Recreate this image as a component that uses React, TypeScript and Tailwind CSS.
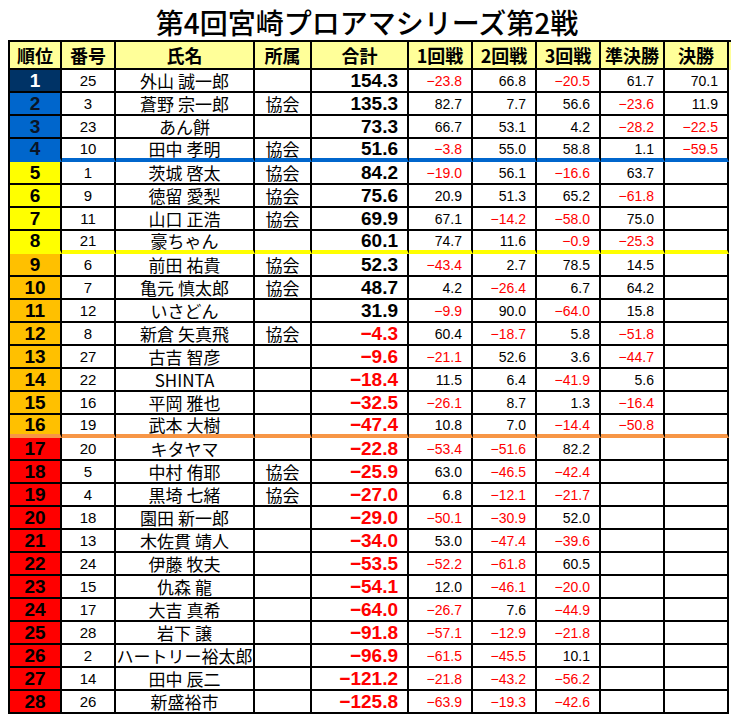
import React from "react";

type Row = {
  no: number;
  name: string;
  team: string;
  total: string;
  rounds: string[];
};

const rows: Row[] = [
  { no: 25, name: "外山 誠一郎", team: "", total: "154.3", rounds: ["−23.8", "66.8", "−20.5", "61.7", "70.1"] },
  { no: 3, name: "蒼野 宗一郎", team: "協会", total: "135.3", rounds: ["82.7", "7.7", "56.6", "−23.6", "11.9"] },
  { no: 23, name: "あん餅", team: "", total: "73.3", rounds: ["66.7", "53.1", "4.2", "−28.2", "−22.5"] },
  { no: 10, name: "田中 孝明", team: "協会", total: "51.6", rounds: ["−3.8", "55.0", "58.8", "1.1", "−59.5"] },
  { no: 1, name: "茨城 啓太", team: "協会", total: "84.2", rounds: ["−19.0", "56.1", "−16.6", "63.7", ""] },
  { no: 9, name: "徳留 愛梨", team: "協会", total: "75.6", rounds: ["20.9", "51.3", "65.2", "−61.8", ""] },
  { no: 11, name: "山口 正浩", team: "協会", total: "69.9", rounds: ["67.1", "−14.2", "−58.0", "75.0", ""] },
  { no: 21, name: "豪ちゃん", team: "", total: "60.1", rounds: ["74.7", "11.6", "−0.9", "−25.3", ""] },
  { no: 6, name: "前田 祐貴", team: "協会", total: "52.3", rounds: ["−43.4", "2.7", "78.5", "14.5", ""] },
  { no: 7, name: "亀元 慎太郎", team: "協会", total: "48.7", rounds: ["4.2", "−26.4", "6.7", "64.2", ""] },
  { no: 12, name: "いさどん", team: "", total: "31.9", rounds: ["−9.9", "90.0", "−64.0", "15.8", ""] },
  { no: 8, name: "新倉 矢真飛", team: "協会", total: "−4.3", rounds: ["60.4", "−18.7", "5.8", "−51.8", ""] },
  { no: 27, name: "古吉 智彦", team: "", total: "−9.6", rounds: ["−21.1", "52.6", "3.6", "−44.7", ""] },
  { no: 22, name: "SHINTA", team: "", total: "−18.4", rounds: ["11.5", "6.4", "−41.9", "5.6", ""] },
  { no: 16, name: "平岡 雅也", team: "", total: "−32.5", rounds: ["−26.1", "8.7", "1.3", "−16.4", ""] },
  { no: 19, name: "武本 大樹", team: "", total: "−47.4", rounds: ["10.8", "7.0", "−14.4", "−50.8", ""] },
  { no: 20, name: "キタヤマ", team: "", total: "−22.8", rounds: ["−53.4", "−51.6", "82.2", "", ""] },
  { no: 5, name: "中村 侑耶", team: "協会", total: "−25.9", rounds: ["63.0", "−46.5", "−42.4", "", ""] },
  { no: 4, name: "黒埼 七緒", team: "協会", total: "−27.0", rounds: ["6.8", "−12.1", "−21.7", "", ""] },
  { no: 18, name: "園田 新一郎", team: "", total: "−29.0", rounds: ["−50.1", "−30.9", "52.0", "", ""] },
  { no: 13, name: "木佐貫 靖人", team: "", total: "−34.0", rounds: ["53.0", "−47.4", "−39.6", "", ""] },
  { no: 24, name: "伊藤 牧夫", team: "", total: "−53.5", rounds: ["−52.2", "−61.8", "60.5", "", ""] },
  { no: 15, name: "仇森 龍", team: "", total: "−54.1", rounds: ["12.0", "−46.1", "−20.0", "", ""] },
  { no: 17, name: "大吉 真希", team: "", total: "−64.0", rounds: ["−26.7", "7.6", "−44.9", "", ""] },
  { no: 28, name: "岩下 譲", team: "", total: "−91.8", rounds: ["−57.1", "−12.9", "−21.8", "", ""] },
  { no: 2, name: "ハートリー裕太郎", team: "", total: "−96.9", rounds: ["−61.5", "−45.5", "10.1", "", ""] },
  { no: 14, name: "田中 辰二", team: "", total: "−121.2", rounds: ["−21.8", "−43.2", "−56.2", "", ""] },
  { no: 26, name: "新盛裕市", team: "", total: "−125.8", rounds: ["−63.9", "−19.3", "−42.6", "", ""] },
];

const headers = ["順位", "番号", "氏名", "所属", "合計", "1回戦", "2回戦", "3回戦", "準決勝", "決勝"];

const gridCols =
  "grid grid-cols-[52px_54px_139px_57px_97px_64px_64px_64px_64px_64px]";

const jp = "font-['Noto_Sans_CJK_JP',sans-serif]";

function rankStyle(rank: number) {
  if (rank === 1) return "bg-[#003366] text-white";
  if (rank <= 4) return "bg-[#0066cc] text-[#0a1526]";
  if (rank <= 8) return "bg-[#ffff00] text-black";
  if (rank <= 16) return "bg-[#ffc000] text-black";
  return "bg-[#ff0000] text-black";
}

// bottom edge of every cell; the last row of each band gets a coloured line
function bottomEdge(rank: number) {
  if (rank === 4) return "border-b-4 border-b-[#0066cc]";
  if (rank === 8) return "border-b-4 border-b-[#ffff00]";
  if (rank === 16) return "border-b-4 border-b-[#f79646]";
  return "border-b-2 border-b-black";
}

const neg = (v: string) => v.startsWith("−");

export default function App() {
  return (
    <div
      className="w-[734px] h-[714px] overflow-hidden bg-white text-black"
      style={{ fontFamily: '"Liberation Sans", "Noto Sans CJK JP", sans-serif' }}
    >
      <h1 className={`h-[40px] flex items-center justify-center text-[28px] leading-none pt-[3px] font-medium ${jp}`}>
        第4回宮崎プロアマシリーズ第2戦
      </h1>

      <div className="ml-[8px] w-[723px] border-l-2 border-t-2 border-black">
        <div className={`${gridCols} h-[28px] bg-[#ffff99]`}>
          {headers.map((h) => (
            <div
              key={h}
              className={`flex items-center justify-center border-r-2 border-b-2 border-black text-[18px] leading-none font-bold ${jp}`}
            >
              {h}
            </div>
          ))}
        </div>

        {rows.map((r, i) => {
          const rank = i + 1;
          const edge = `border-r-2 border-r-black ${bottomEdge(rank)}`;
          return (
            <div key={rank} className={`${gridCols} h-[23px]`}>
              <div
                className={`flex items-center justify-center ${edge} text-[19px] leading-none font-bold ${rankStyle(rank)}`}
              >
                {rank}
              </div>
              <div className={`flex items-center justify-center ${edge} text-[15px] leading-none`}>
                {r.no}
              </div>
              <div className={`flex items-center justify-center ${edge} text-[17px] leading-none whitespace-nowrap ${jp}`}>
                {r.name}
              </div>
              <div className={`flex items-center justify-center ${edge} text-[17px] leading-none ${jp}`}>
                {r.team}
              </div>
              <div
                className={`flex items-center justify-end pr-[9px] ${edge} text-[19px] leading-none font-bold ${
                  neg(r.total) ? "text-[#ff0000]" : "text-black"
                }`}
              >
                {r.total}
              </div>
              {r.rounds.map((v, j) => (
                <div
                  key={j}
                  className={`flex items-center justify-end pr-[9px] ${edge} text-[14px] leading-none ${
                    neg(v) ? "text-[#ff0000]" : "text-black"
                  }`}
                >
                  {v}
                </div>
              ))}
            </div>
          );
        })}
      </div>
    </div>
  );
}
